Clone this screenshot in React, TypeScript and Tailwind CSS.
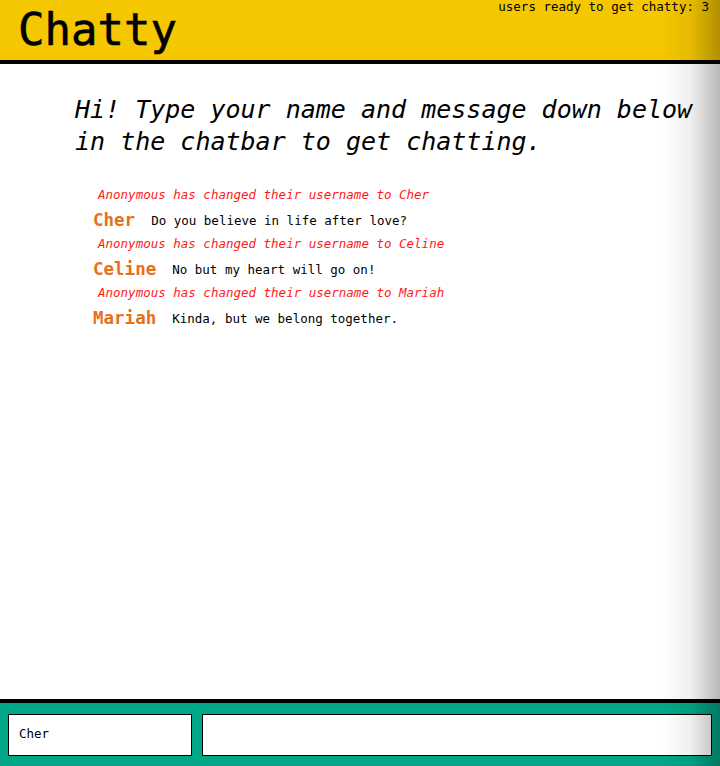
import React from "react";

const mono = { fontFamily: '"DejaVu Sans Mono", "Liberation Mono", monospace' };

type Item =
  | { kind: "sys"; text: string }
  | { kind: "msg"; user: string; text: string };

const items: Item[] = [
  { kind: "sys", text: "Anonymous has changed their username to Cher" },
  { kind: "msg", user: "Cher", text: "Do you believe in life after love?" },
  { kind: "sys", text: "Anonymous has changed their username to Celine" },
  { kind: "msg", user: "Celine", text: "No but my heart will go on!" },
  { kind: "sys", text: "Anonymous has changed their username to Mariah" },
  { kind: "msg", user: "Mariah", text: "Kinda, but we belong together." },
];

export default function App() {
  return (
    <div className="relative flex h-[766px] w-full flex-col overflow-hidden bg-white" style={mono}>
      <header className="flex h-[64px] shrink-0 items-start justify-between border-b-4 border-black bg-[#f5c700]">
        <h1 className="ml-[18px] mt-[2px] text-[44px] leading-[56px] text-black [-webkit-text-stroke:0.6px_black]">Chatty</h1>
        <span className="mr-[11px] mt-[-1px] text-[12.5px] leading-[16px] text-black">users ready to get chatty: 3</span>
      </header>
      <main className="flex-1 pl-[75px] pt-[30px]">
        <h2 className="w-[630px] text-[25px] italic leading-[32px] text-black">
          Hi! Type your name and message down below in the chatbar to get chatting.
        </h2>
        <div className="mt-[25px] flex flex-col pl-[18px]">
          {items.map((it, i) =>
            it.kind === "sys" ? (
              <div key={i} className="h-[24px] pl-[5px] text-[12.5px] italic leading-[24px] text-[#ff1a1a]">
                {it.text}
              </div>
            ) : (
              <div key={i} className="flex h-[25px] items-center pt-[2px]">
                <span className="text-[17.5px] font-bold leading-[25px] text-[#e86f1a]">{it.user}</span>
                <span className="ml-[16px] text-[12.5px] leading-[25px] text-black">{it.text}</span>
              </div>
            )
          )}
        </div>
      </main>
      <footer className="flex h-[67px] shrink-0 items-center gap-[10px] border-t-4 border-black bg-[#00a887] px-[8px]">
        <div className="flex h-[42px] w-[184px] items-center border border-black bg-white pl-[10px] text-[12.5px] text-black">
          Cher
        </div>
        <div className="h-[42px] flex-1 border border-black bg-white" />
      </footer>
      <div className="pointer-events-none absolute right-0 top-0 h-full w-[60px] bg-gradient-to-r from-transparent via-black/[0.06] to-black/[0.28]" />
    </div>
  );
}
